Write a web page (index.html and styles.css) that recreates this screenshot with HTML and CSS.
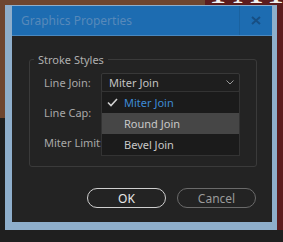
FILE: index.html
```html
<!DOCTYPE html>
<html lang="en">
<head>
    <meta charset="UTF-8">
    <meta name="viewport" content="width=device-width, initial-scale=1.0">
    <title>Graphics Properties</title>
    <link rel="stylesheet" href="styles.css">
</head>
<body>

    <span class="backdrop-text">TAT &nbsp;11</span>

    <div class="dialog">
        <div class="titlebar">
            <span class="title">Graphics Properties</span>
            <button class="close" aria-label="Close">
                <svg width="10" height="9" viewBox="0 0 10 9">
                    <path d="M1 1 L9 8 M9 1 L1 8" stroke="#174f84" stroke-width="2" fill="none"/>
                </svg>
            </button>
        </div>

        <div class="dialog-body">
            <fieldset class="group">
                <legend>Stroke Styles</legend>

                <div class="row">
                    <label>Line Join:</label>
                    <div class="select">
                        <span>Miter Join</span>
                        <svg width="8" height="5" viewBox="0 0 8 5">
                            <path d="M0.5 0.5 L4 4 L7.5 0.5" stroke="#9a9a9a" stroke-width="1" fill="none"/>
                        </svg>
                    </div>

                    <!-- open dropdown -->
                    <ul class="menu">
                        <li class="selected">
                            <svg class="check" width="11" height="9" viewBox="0 0 11 9">
                                <path d="M1 4.5 L4 7.5 L10 1" stroke="#d0d0d0" stroke-width="1.6" fill="none"/>
                            </svg>
                            Miter Join
                        </li>
                        <li class="hover">Round Join</li>
                        <li>Bevel Join</li>
                    </ul>
                </div>

                <div class="row">
                    <label>Line Cap:</label>
                    <div class="select"></div>
                </div>

                <div class="row">
                    <label>Miter Limit:</label>
                    <div class="select"></div>
                </div>
            </fieldset>

            <div class="buttons">
                <button class="btn btn-ok">OK</button>
                <button class="btn btn-cancel">Cancel</button>
            </div>
        </div>
    </div>

</body>
</html>
```

FILE: styles.css
```css
* {
    box-sizing: border-box;
}

body {
    margin: 0;
    width: 283px;
    height: 242px;
    padding: 5px 0 0 5px;
    overflow: hidden;
    position: relative;
    font-family: "Noto Sans", "Open Sans", sans-serif;
    font-size: 11px;
    background:
        linear-gradient(#6e4630, #6e4630) left top / 205px 118px no-repeat,
        linear-gradient(#5c1c1e, #5c1c1e) right top / 78px 230px no-repeat,
        #1f1f1f;
}

.backdrop-text {
    position: absolute;
    top: -34px;
    left: 206px;
    color: #f2f2f2;
    font-family: "Liberation Serif", serif;
    font-size: 40px;
    letter-spacing: 6px;
}

/* window */
.dialog {
    position: relative;
    width: 272px;
    height: 225px;
    border: solid #8eaecb;
    border-width: 1px 5px 8px 7px;
    background: #232323;
    display: flex;
    flex-direction: column;
}

.titlebar {
    height: 30px;
    background: #1d6cb1;
    border-bottom: 1px solid #4a88bf;
    display: flex;
    align-items: center;
}

.title {
    flex: 1;
    padding-left: 9px;
    color: #5789ba;
    font-size: 12px;
}

.close {
    width: 33px;
    height: 29px;
    border: 0;
    border-left: 1px solid #1a62a0;
    background: transparent;
    display: flex;
    align-items: center;
    justify-content: center;
    padding: 0;
}

.dialog-body {
    flex: 1;
    padding: 16px 15px 0 17px;
}

/* group box */
.group {
    margin: 0;
    height: 115px;
    border: 1px solid #3a3a3a;
    border-radius: 3px;
    padding: 5px 0 0 14px;
    color: #a8a8a8;
}

.group legend {
    margin-left: -10px;
    padding: 0 4px;
    color: #b0b0b0;
}

.row {
    position: relative;
    display: flex;
    align-items: center;
    height: 20px;
    margin-bottom: 10px;
}

.row label {
    width: 57px;
    white-space: nowrap;
}

.select {
    width: 139px;
    height: 19px;
    border: 1px solid #383838;
    border-radius: 2px;
    background: #1e1e1e;
    display: flex;
    align-items: center;
    justify-content: space-between;
    padding: 0 5px 0 7px;
    color: #c2c2c2;
}

/* dropdown */
.menu {
    position: absolute;
    top: 19px;
    left: 57px;
    width: 139px;
    margin: 0;
    padding: 0;
    list-style: none;
    background: #1b1b1b;
    border: 1px solid #333;
    z-index: 10;
}

.menu li {
    position: relative;
    height: 21px;
    line-height: 21px;
    padding-left: 22px;
    color: #c8c8c8;
}

.menu li.selected {
    color: #3d8ad6;
}

.menu li.hover {
    background: #464646;
}

.check {
    position: absolute;
    left: 5px;
    top: 6px;
}

/* buttons */
.buttons {
    display: flex;
    justify-content: flex-end;
    gap: 11px;
    margin-top: 21px;
    padding-right: 1px;
}

.btn {
    width: 79px;
    height: 20px;
    border-radius: 10px;
    background: transparent;
    font-family: inherit;
    font-size: 12px;
    padding: 0;
}

.btn-ok {
    border: 1px solid #cfcfcf;
    color: #e8e8e8;
}

.btn-cancel {
    border: 1px solid #6a6a6a;
    color: #9a9a9a;
}
```
